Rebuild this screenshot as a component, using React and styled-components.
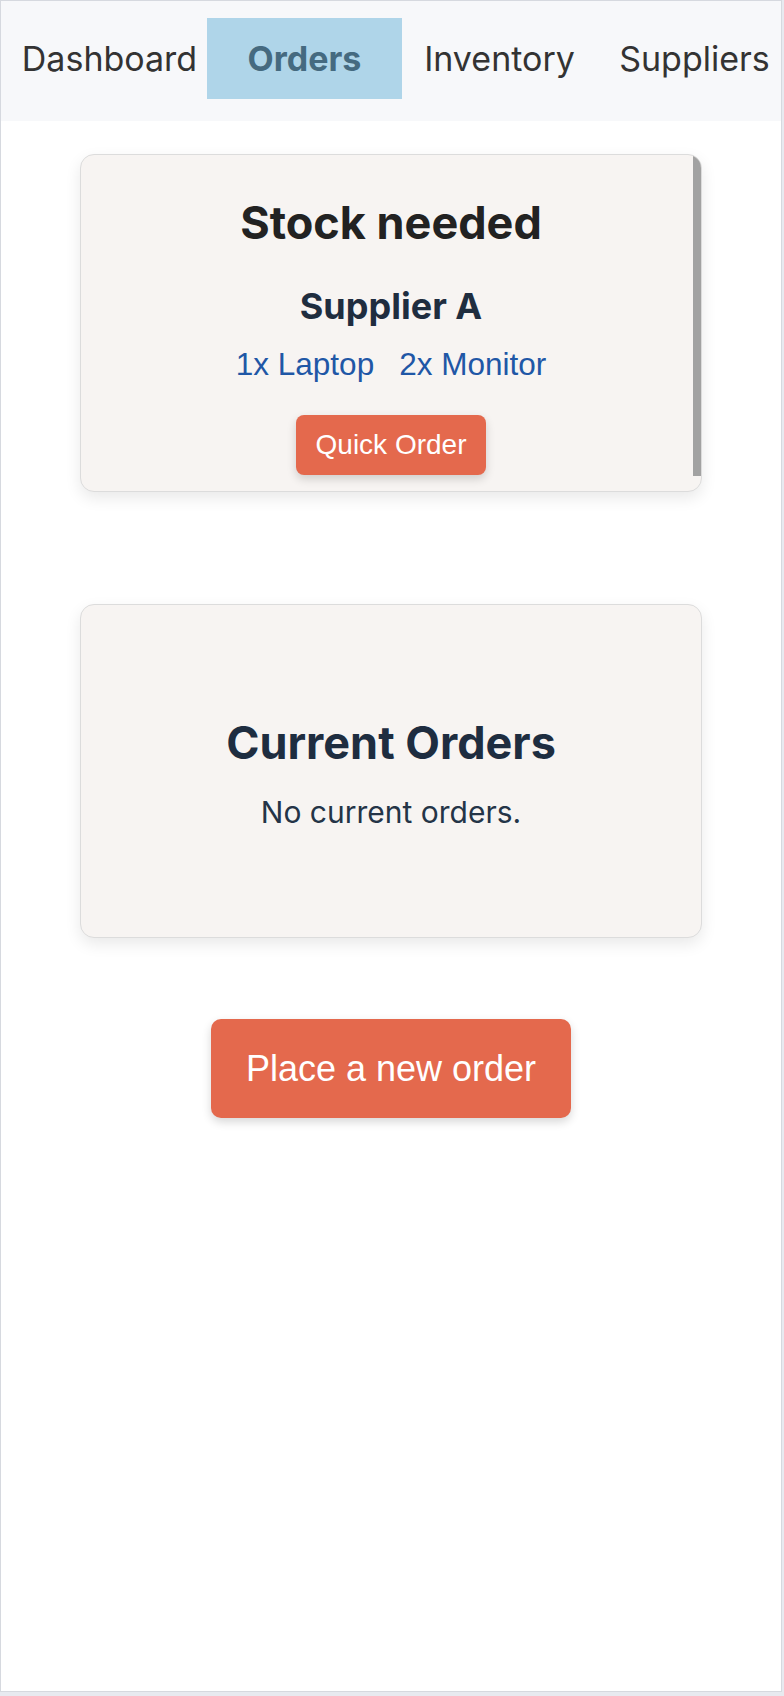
import styled, { createGlobalStyle } from "styled-components";

const GlobalStyle = createGlobalStyle`
  html, body {
    margin: 0;
    padding: 0;
    background: #e8eaf0;
  }
  * {
    box-sizing: border-box;
  }
`;

const Frame = styled.div`
  width: 782px;
  height: 1692px;
  border: 1px solid #d6d9df;
  background: #ffffff;
  overflow: hidden;
`;

const Nav = styled.nav`
  display: flex;
  background: #f7f8fa;
  padding: 17px 0 22px 11px;
`;

const NavItem = styled.a`
  flex: 0 0 195px;
  height: 81px;
  display: flex;
  align-items: center;
  justify-content: center;
  font-family: Inter, "Noto Sans", sans-serif;
  font-size: 34px;
  font-weight: ${(p) => (p.$active ? 700 : 400)};
  color: ${(p) => (p.$active ? "#456a80" : "#333333")};
  background: ${(p) => (p.$active ? "#afd5e9" : "transparent")};
  text-decoration: none;
  white-space: nowrap;
  cursor: pointer;
`;

const Main = styled.main`
  display: flex;
  flex-direction: column;
  align-items: center;
  padding-top: 33px;
`;

const Card = styled.section`
  position: relative;
  width: 622px;
  height: ${(p) => p.$height}px;
  background: #f7f4f2;
  border: 1px solid #dcdcdc;
  border-radius: 14px;
  box-shadow: 0 6px 16px rgba(0, 0, 0, 0.09);
  overflow: hidden;
  display: flex;
  flex-direction: column;
  align-items: center;
  justify-content: ${(p) => (p.$center ? "center" : "flex-start")};
  padding-top: ${(p) => (p.$center ? 3 : 41)}px;
  margin-bottom: ${(p) => p.$gap}px;
`;

const ScrollThumb = styled.div`
  position: absolute;
  top: 0;
  right: 0;
  width: 8px;
  height: 321px;
  background: #a2a2a2;
`;

const Title = styled.h2`
  margin: 0;
  font-family: Inter, "Noto Sans", sans-serif;
  font-size: 45px;
  line-height: 1.2;
  font-weight: 700;
  color: ${(p) => p.$color || "#1e2d40"};
`;

const Supplier = styled.h3`
  margin: 35px 0 0;
  font-family: Inter, "Noto Sans", sans-serif;
  font-size: 36px;
  line-height: 1.2;
  font-weight: 700;
  color: #1f2d3f;
`;

const ItemList = styled.div`
  display: flex;
  gap: 25px;
  margin-top: 18px;
`;

const Item = styled.a`
  font-family: "Liberation Sans", Arial, sans-serif;
  font-size: 31.5px;
  line-height: 1.2;
  color: #1f57a6;
  text-decoration: none;
`;

const Button = styled.button`
  border: none;
  background: #e4694d;
  color: #ffffff;
  font-family: "Liberation Sans", Arial, sans-serif;
  font-size: ${(p) => (p.$big ? 36 : 28)}px;
  width: ${(p) => (p.$big ? 360 : 190)}px;
  height: ${(p) => (p.$big ? 99 : 60)}px;
  border-radius: ${(p) => (p.$big ? 10 : 8)}px;
  margin-top: ${(p) => (p.$big ? 0 : 31)}px;
  box-shadow: 0 4px 10px rgba(0, 0, 0, 0.16);
  cursor: pointer;
  flex-shrink: 0;
`;

const Empty = styled.p`
  margin: 24px 0 0;
  font-family: Inter, "Noto Sans", sans-serif;
  font-size: 30px;
  line-height: 1.2;
  color: #243447;
`;

const tabs = ["Dashboard", "Orders", "Inventory", "Suppliers"];

const App = () => {
  return (
    <>
      <GlobalStyle />
      <Frame>
        <Nav>
          {tabs.map((t) => (
            <NavItem key={t} $active={t === "Orders"}>
              {t}
            </NavItem>
          ))}
        </Nav>
        <Main>
          <Card $height={338} $gap={112}>
            <ScrollThumb />
            <Title $color="#222222">Stock needed</Title>
            <Supplier>Supplier A</Supplier>
            <ItemList>
              <Item>1x Laptop</Item>
              <Item>2x Monitor</Item>
            </ItemList>
            <Button>Quick Order</Button>
          </Card>
          <Card $height={334} $gap={81} $center>
            <Title>Current Orders</Title>
            <Empty>No current orders.</Empty>
          </Card>
          <Button $big>Place a new order</Button>
        </Main>
      </Frame>
    </>
  );
};

export default App;
